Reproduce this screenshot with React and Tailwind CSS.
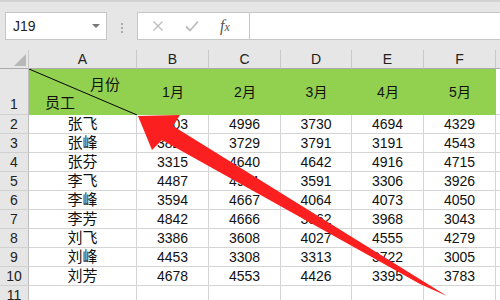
import React from "react";

// column widths include the right gridline
const cols = [
  { key: "A", w: "w-[108px]" },
  { key: "B", w: "w-[72px]" },
  { key: "C", w: "w-[72px]" },
  { key: "D", w: "w-[71px]" },
  { key: "E", w: "w-[72px]" },
  { key: "F", w: "w-[72px]" },
];

const months = ["1月", "2月", "3月", "4月", "5月"];

const rows = [
  ["张飞", 4103, 4996, 3730, 4694, 4329],
  ["张峰", 3829, 3729, 3791, 3191, 4543],
  ["张芬", 3315, 4640, 4642, 4916, 4715],
  ["李飞", 4487, 4931, 3591, 3306, 3926],
  ["李峰", 3594, 4667, 4064, 4073, 4050],
  ["李芳", 4842, 4666, 3862, 3968, 3043],
  ["刘飞", 3386, 3608, 4027, 4555, 4279],
  ["刘峰", 4453, 3308, 3313, 3722, 3005],
  ["刘芳", 4678, 4553, 4426, 3395, 3783],
];

const font = { fontFamily: '"Liberation Sans", "Noto Sans CJK SC", sans-serif' };

const RowHead = ({ children, className = "" }) => (
  <div
    className={`w-[29px] shrink-0 flex justify-center bg-[#e6e6e6] border-r border-r-[#bdbdbd] border-b border-b-[#d0d0d0] text-[14px] text-[#222] ${className}`}
  >
    {children}
  </div>
);

const FormulaBar = () => (
  <div className="h-[50px] bg-[#e6e6e6] border-t-2 border-t-[#d2d2d2] relative">
    {/* name box */}
    <div className="absolute left-[5px] top-[10px] w-[102px] h-[28px] bg-white border border-[#c6c6c6] flex items-center pl-[7px] pr-[6px]">
      <span className="text-[14px] text-[#222] flex-1">J19</span>
      <span className="w-0 h-0 border-l-[4px] border-r-[4px] border-t-[4px] border-l-transparent border-r-transparent border-t-[#777]" />
    </div>
    {/* grip dots */}
    <div className="absolute left-[121px] top-[21px] flex flex-col gap-[2px]">
      <span className="w-[2px] h-[2px] bg-[#aaa]" />
      <span className="w-[2px] h-[2px] bg-[#aaa]" />
      <span className="w-[2px] h-[2px] bg-[#aaa]" />
    </div>
    {/* cancel / enter / fx */}
    <div className="absolute left-[137px] top-[10px] w-[113px] h-[28px] bg-white border border-[#c6c6c6] flex items-center">
      <svg width="12" height="12" viewBox="0 0 12 12" className="ml-[14px]">
        <path d="M1.5 1.5 L10.5 10.5 M10.5 1.5 L1.5 10.5" stroke="#bdbdbd" strokeWidth="1.4" />
      </svg>
      <svg width="14" height="12" viewBox="0 0 14 12" className="ml-[21px]">
        <path d="M1 6.5 L5 10.5 L13 1.5" stroke="#bdbdbd" strokeWidth="1.8" fill="none" />
      </svg>
      <span
        className="ml-[21px] text-[16px] italic text-[#555] leading-none"
        style={{ fontFamily: '"Liberation Serif", serif' }}
      >
        f<span className="text-[12px]">x</span>
      </span>
    </div>
    {/* formula input */}
    <div className="absolute left-[249px] top-[10px] right-0 h-[28px] bg-white border border-[#c6c6c6] border-r-0" />
  </div>
);

const ColumnHeader = () => (
  <div className="flex h-[19px]">
    <div className="w-[29px] shrink-0 bg-[#e6e6e6] border-r border-r-[#c9c9c9] border-b border-b-[#ababab] relative">
      <svg width="12" height="12" viewBox="0 0 12 12" className="absolute right-[2px] bottom-[2px]">
        <polygon points="12,0 12,12 0,12" fill="#b8b8b8" />
      </svg>
    </div>
    {cols.map((c) => (
      <div
        key={c.key}
        className={`${c.w} shrink-0 bg-[#e6e6e6] border-r border-r-[#c9c9c9] border-b border-b-[#ababab] flex items-center justify-center text-[14px] text-[#222]`}
      >
        {c.key}
      </div>
    ))}
    <div className="flex-1 bg-[#e6e6e6] border-b border-b-[#ababab]" />
  </div>
);

const TitleRow = () => (
  <div className="flex h-[46px]">
    <RowHead className="items-end leading-[19px]">1</RowHead>
    <div className="w-[108px] shrink-0 bg-[#92d050] relative flex flex-col pt-[7px] text-[15px] leading-[18px] text-[#111]">
      <svg className="absolute inset-0" width="108" height="46" viewBox="0 0 108 46">
        <line x1="0" y1="0" x2="108" y2="46" stroke="#000" strokeWidth="1" />
      </svg>
      <span className="self-end pr-[17px]">月份</span>
      <span className="self-start pl-[16px]">员工</span>
    </div>
    {months.map((m, i) => (
      <div
        key={m}
        className={`${cols[i + 1].w} shrink-0 bg-[#92d050] flex items-center justify-center text-[14px] text-[#111]`}
      >
        {m}
      </div>
    ))}
    <div className="flex-1 border-b border-b-[#d4d4d4]" />
  </div>
);

const DataRow = ({ n, cells }) => (
  <div className="flex h-[19px]">
    <RowHead className="items-center">{n}</RowHead>
    {cells.map((v, i) => (
      <div
        key={i}
        className={`${cols[i].w} shrink-0 bg-white border-r border-b border-[#d4d4d4] flex items-center justify-center text-[#111] ${
          i === 0 ? "text-[15px]" : "text-[14px]"
        }`}
      >
        {v}
      </div>
    ))}
    <div className="flex-1 border-b border-b-[#d4d4d4]" />
  </div>
);

const App = () => {
  return (
    <div className="w-[500px] h-[300px] overflow-hidden relative bg-white" style={font}>
      <FormulaBar />
      <ColumnHeader />
      <TitleRow />
      {rows.map((r, i) => (
        <DataRow key={i} n={i + 2} cells={r} />
      ))}
      <DataRow n={11} cells={["", "", "", "", "", ""]} />

      {/* red annotation arrow */}
      <svg
        className="absolute inset-0 pointer-events-none"
        width="500"
        height="300"
        viewBox="0 0 500 300"
      >
        <polygon
          points="138,116 180,115 173,126 447,296 420,284 162,140 152,150"
          fill="#fb1f1f"
        />
      </svg>
    </div>
  );
};

export default App;
